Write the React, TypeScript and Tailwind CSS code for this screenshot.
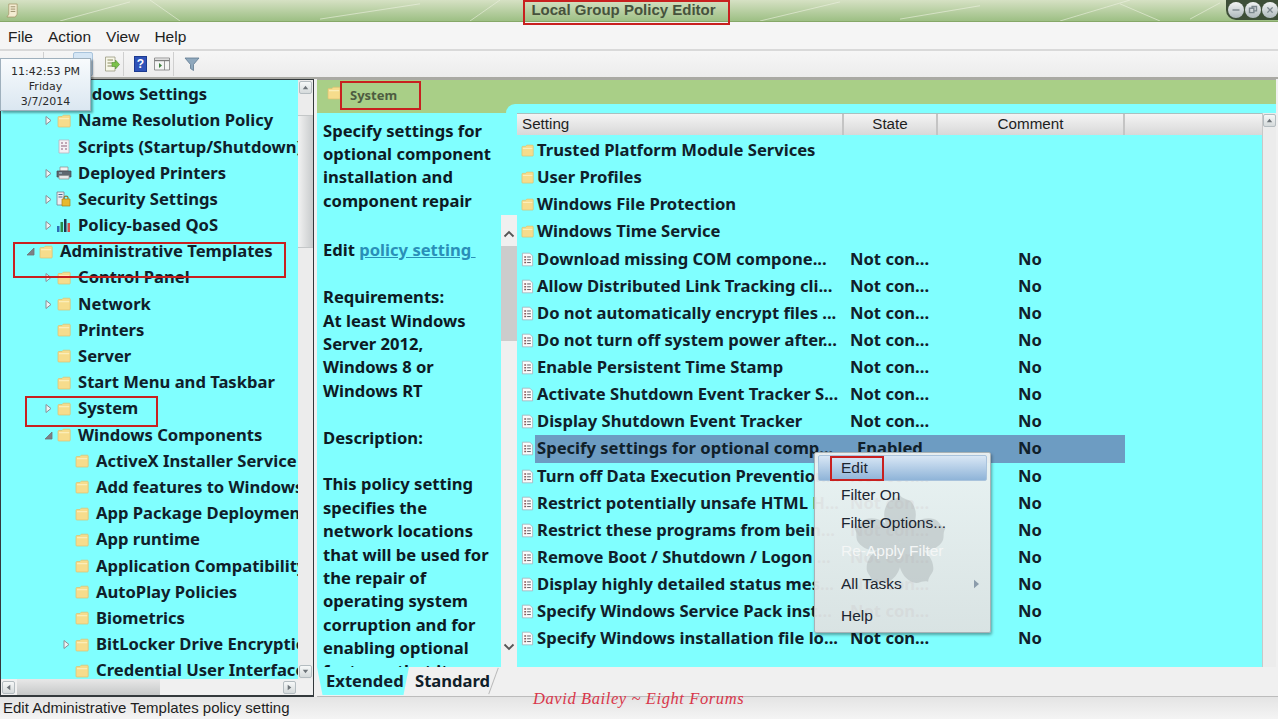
import type { ReactNode } from 'react';

type TreeIcon = 'folder' | 'script' | 'printer' | 'security' | 'chart';
type TreeRow = { label: string; depth: number; icon: TreeIcon; arrow?: 'closed' | 'open' };

const treeRows: TreeRow[] = [
  { label: 'Windows Settings', depth: 1, icon: 'folder', arrow: 'open' },
  { label: 'Name Resolution Policy', depth: 2, icon: 'folder', arrow: 'closed' },
  { label: 'Scripts (Startup/Shutdown)', depth: 2, icon: 'script' },
  { label: 'Deployed Printers', depth: 2, icon: 'printer', arrow: 'closed' },
  { label: 'Security Settings', depth: 2, icon: 'security', arrow: 'closed' },
  { label: 'Policy-based QoS', depth: 2, icon: 'chart', arrow: 'closed' },
  { label: 'Administrative Templates', depth: 1, icon: 'folder', arrow: 'open' },
  { label: 'Control Panel', depth: 2, icon: 'folder', arrow: 'closed' },
  { label: 'Network', depth: 2, icon: 'folder', arrow: 'closed' },
  { label: 'Printers', depth: 2, icon: 'folder' },
  { label: 'Server', depth: 2, icon: 'folder' },
  { label: 'Start Menu and Taskbar', depth: 2, icon: 'folder' },
  { label: 'System', depth: 2, icon: 'folder', arrow: 'closed' },
  { label: 'Windows Components', depth: 2, icon: 'folder', arrow: 'open' },
  { label: 'ActiveX Installer Service', depth: 3, icon: 'folder' },
  { label: 'Add features to Windows 8', depth: 3, icon: 'folder' },
  { label: 'App Package Deployment', depth: 3, icon: 'folder' },
  { label: 'App runtime', depth: 3, icon: 'folder' },
  { label: 'Application Compatibility', depth: 3, icon: 'folder' },
  { label: 'AutoPlay Policies', depth: 3, icon: 'folder' },
  { label: 'Biometrics', depth: 3, icon: 'folder' },
  { label: 'BitLocker Drive Encryption', depth: 3, icon: 'folder', arrow: 'closed' },
  { label: 'Credential User Interface', depth: 3, icon: 'folder' },
];

const folderRows = ['Trusted Platform Module Services', 'User Profiles', 'Windows File Protection', 'Windows Time Service'];

const policyRows = [
  { label: 'Download missing COM compone...', state: 'Not con...' },
  { label: 'Allow Distributed Link Tracking cli...', state: 'Not con...' },
  { label: 'Do not automatically encrypt files ...', state: 'Not con...' },
  { label: 'Do not turn off system power after...', state: 'Not con...' },
  { label: 'Enable Persistent Time Stamp', state: 'Not con...' },
  { label: 'Activate Shutdown Event Tracker S...', state: 'Not con...' },
  { label: 'Display Shutdown Event Tracker', state: 'Not con...' },
  { label: 'Specify settings for optional comp...', state: 'Enabled', selected: true },
  { label: 'Turn off Data Execution Prevention...', state: 'Not con...' },
  { label: 'Restrict potentially unsafe HTML H...', state: 'Not con...' },
  { label: 'Restrict these programs from bein...', state: 'Not con...' },
  { label: 'Remove Boot / Shutdown / Logon ...', state: 'Not con...' },
  { label: 'Display highly detailed status mes...', state: 'Not con...' },
  { label: 'Specify Windows Service Pack inst...', state: 'Not con...' },
  { label: 'Specify Windows installation file lo...', state: 'Not con...' },
];

const description = [
  'This policy setting',
  'specifies the',
  'network locations',
  'that will be used for',
  'the repair of',
  'operating system',
  'corruption and for',
  'enabling optional',
  'features that it',
];

function Folder({ className = 'w-[14px] h-[14px]' }: { className?: string }) {
  return (
    <svg viewBox="0 0 14 14" className={`shrink-0 ${className}`}>
      <path d="M1 3.5 C1 2.8 1.4 2.5 2 2.5 H5 L6.2 1.2 H12.4 C12.9 1.2 13.2 1.5 13.2 2 V12.2 C13.2 12.7 12.9 13 12.4 13 H1.8 C1.3 13 1 12.7 1 12.2 Z" fill="#f6dc8c" stroke="#dcc070" strokeWidth="0.7" />
      <path d="M2 4.2 H12.2 V5.2 H2 Z" fill="#fdf2c4" />
    </svg>
  );
}

function PolicyDoc() {
  return (
    <svg viewBox="0 0 14 15" className="w-[13px] h-[15px] shrink-0">
      <path d="M1.5 0.7 H9.5 L12.5 3.7 V14.3 H1.5 Z" fill="#fbfbfb" stroke="#a9a9b4" strokeWidth="0.8" />
      <path d="M3.5 4 H5.5 V5.6 H3.5 Z M3.5 7 H5.5 V8.6 H3.5 Z M3.5 10 H5.5 V11.6 H3.5 Z" fill="#8a5a5a" />
      <path d="M6.6 4.8 H10.6 M6.6 7.8 H10.6 M6.6 10.8 H10.6" stroke="#55555f" strokeWidth="1" />
    </svg>
  );
}

function TreeGlyph({ icon }: { icon: TreeIcon }) {
  if (icon === 'folder') return <Folder />;
  if (icon === 'script') {
    return (
      <svg viewBox="0 0 14 15" className="w-[14px] h-[15px] shrink-0">
        <path d="M2 1 H12 V14 H2 Z" fill="#f3f1f4" stroke="#b9b4c0" strokeWidth="0.8" />
        <path d="M4 4 H6 M8 4 H10 M4 7 H10 M4 10 H6 M8 10 H10" stroke="#8c5f78" strokeWidth="1.2" />
      </svg>
    );
  }
  if (icon === 'printer') {
    return (
      <svg viewBox="0 0 16 14" className="w-[16px] h-[14px] shrink-0">
        <path d="M4 1 H12 V5 H4 Z" fill="#f2f2f2" stroke="#8a8a8a" strokeWidth="0.7" />
        <path d="M1 5 H15 V11 H1 Z" fill="#5f6870" stroke="#3f454b" strokeWidth="0.7" />
        <path d="M3 9.5 H13 V13 H3 Z" fill="#e8e8e8" stroke="#8a8a8a" strokeWidth="0.7" />
        <path d="M3 7 H6" stroke="#b7d2e0" strokeWidth="1" />
      </svg>
    );
  }
  if (icon === 'security') {
    return (
      <svg viewBox="0 0 15 16" className="w-[15px] h-[16px] shrink-0">
        <path d="M1 1 H8 V14 H1 Z" fill="#ededf2" stroke="#7c7f8c" strokeWidth="0.8" />
        <path d="M2.5 3.5 H6.5 M2.5 6 H6.5" stroke="#4d6b8f" strokeWidth="1.2" />
        <path d="M8 8 V6.5 C8 4.6 12 4.6 12 6.5 V8" fill="none" stroke="#8d7330" strokeWidth="1.2" />
        <path d="M6 8 H14 V15 H6 Z" fill="#e7b92f" stroke="#a9811a" strokeWidth="0.7" />
      </svg>
    );
  }
  return (
    <svg viewBox="0 0 16 15" className="w-[16px] h-[15px] shrink-0">
      <path d="M1 8 H3.5 V14 H1 Z" fill="#2d6fb5" />
      <path d="M4.5 4 H7 V14 H4.5 Z" fill="#2a8c4a" />
      <path d="M8 1 H10.5 V14 H8 Z" fill="#20354f" />
      <path d="M11.5 5 H14 V14 H11.5 Z" fill="#d0504a" />
    </svg>
  );
}

function Arrow({ kind }: { kind?: 'closed' | 'open' }) {
  if (!kind) return <span className="w-[9px] shrink-0" />;
  return (
    <svg viewBox="0 0 9 11" className="w-[9px] h-[11px] shrink-0">
      {kind === 'closed' ? (
        <path d="M2 1.5 L7 5.5 L2 9.5 Z" fill="#eef3f3" stroke="#8a8f96" strokeWidth="1" />
      ) : (
        <path d="M1 9 L8 9 L8 2 Z" fill="#7d8085" stroke="#6f7277" strokeWidth="0.8" />
      )}
    </svg>
  );
}

function ScrollButton({ dir }: { dir: 'up' | 'down' | 'left' | 'right' }) {
  const paths = { up: 'M2 7 L5 3 L8 7 Z', down: 'M2 3 L5 7 L8 3 Z', left: 'M7 2 L3 5 L7 8 Z', right: 'M3 2 L7 5 L3 8 Z' };
  return (
    <span className="flex items-center justify-center w-[13px] h-[13px] shrink-0 rounded-[2px] border border-[#b4bcc0] bg-gradient-to-b from-[#f6f8f8] to-[#d5dadb]">
      <svg viewBox="0 0 10 10" className="w-[9px] h-[9px]">
        <path d={paths[dir]} fill="#6d7378" />
      </svg>
    </span>
  );
}

function Separator() {
  return <span className="w-px h-[24px] bg-[#cfcfcf] shrink-0" />;
}

function RedBox({ className }: { className: string }) {
  return <div className={`absolute border-2 border-[#c8201f] pointer-events-none ${className}`} />;
}

function Line({ children, className = '' }: { children: ReactNode; className?: string }) {
  return <div className={`h-[23.4px] leading-[23.4px] whitespace-nowrap ${className}`}>{children}</div>;
}

function Hibiscus() {
  return (
    <svg viewBox="0 0 100 100" className="absolute left-[33px] top-[38px] w-[104px] h-[104px] opacity-35">
      <g fill="#9aa2a4">
        {[0, 72, 144, 216, 288].map((deg) => (
          <path key={deg} transform={`rotate(${deg} 50 50)`} d="M50 50 C38 40 30 24 38 12 C41 7 46 9 50 4 C54 9 59 7 62 12 C70 24 62 40 50 50 Z" />
        ))}
      </g>
    </svg>
  );
}

function ContextMenu() {
  const item = 'h-[28px] flex items-center pl-[23px] pr-[7px] text-[15.5px] text-[#1c2530]';
  return (
    <div className="absolute left-[814px] top-[452px] w-[177px] h-[181px] rounded-[2px] border border-[#a8b2b6] bg-gradient-to-b from-[#eef2f2f2] to-[#dde2e2f4] shadow-[1px_2px_3px_rgba(0,0,0,0.35)] p-[2px_3px] font-['Liberation_Sans',sans-serif]">
      <Hibiscus />
      <div className="relative">
        <div className="h-[26px] flex items-center pl-[22px] text-[15.5px] text-[#1c2530] rounded-[2px] bg-gradient-to-b from-[#d9e7f5] to-[#8fb4d8] border border-[#a9c3dc]">Edit</div>
        <div className={item}>Filter On</div>
        <div className={item}>Filter Options...</div>
        <div className={`${item} text-[#f4f6f6]`}>Re-Apply Filter</div>
        <div className={`${item} mt-[5px] justify-between`}>
          <span>All Tasks</span>
          <svg viewBox="0 0 8 12" className="w-[7px] h-[10px]">
            <path d="M1 1 L7 6 L1 11 Z" fill="#8b9cab" />
          </svg>
        </div>
        <div className={`${item} mt-[4px]`}>Help</div>
      </div>
    </div>
  );
}

export default function App() {
  return (
    <div className="relative w-[1278px] h-[719px] overflow-hidden flex flex-col bg-[#f0f0f0] font-['Noto_Sans',sans-serif]">
      {/* Title bar */}
      <div className="relative h-[22px] shrink-0 flex items-center justify-center pr-[31px] bg-gradient-to-b from-[#d6e1c4] to-[#9dbf84] border-b border-[#86a868]">
        <svg viewBox="0 0 1278 22" className="absolute inset-0 w-full h-full" preserveAspectRatio="none">
          <path d="M60 22 L130 2 M180 22 L150 0 M320 20 L420 4 M470 22 L500 0 M760 22 L840 2 M900 20 L980 6 M1060 22 L1130 0 M1160 22 L1120 4 M1190 20 L1220 3" stroke="#eef2e2" strokeWidth="1" opacity="0.6" fill="none" />
        </svg>
        <svg viewBox="0 0 14 16" className="absolute left-[6px] top-[3px] w-[13px] h-[15px]">
          <path d="M3 1 H12 V12 L10 15 H1 L3 12 Z" fill="#f4ecd2" stroke="#a49668" strokeWidth="0.8" />
          <path d="M5 4 H10 M5 6.5 H10 M5 9 H10" stroke="#8b7f5a" strokeWidth="0.9" />
        </svg>
        <span className="relative text-[15px] font-bold text-[#46523c] font-['Liberation_Sans',sans-serif]">Local Group Policy Editor</span>
        <div className="absolute right-0 top-0 h-[20px] w-[52px] rounded-bl-[10px] bg-[#3e4f38] flex items-center justify-end gap-[1px]">
          {['M4 8 H12', 'M4 6 H9 V11 H4 Z M7 6 V4 H12 V9 H9', 'M5 5 L11 11 M11 5 L5 11'].map((d) => (
            <span key={d} className="w-[16px] h-[16px] rounded-full bg-gradient-to-b from-[#f2f4f4] to-[#aeb8bb] flex items-center justify-center">
              <svg viewBox="0 0 16 16" className="w-[14px] h-[14px]">
                <path d={d} fill="none" stroke="#7b878d" strokeWidth="1.6" />
              </svg>
            </span>
          ))}
        </div>
      </div>

      {/* Menu bar */}
      <div className="h-[29px] shrink-0 flex items-center gap-[15px] pl-[8px] pt-[2px] bg-[#f5f5f5] border-b-2 border-[#d9d9d9] text-[15.5px] text-[#1e1e1e] font-['Liberation_Sans',sans-serif]">
        <span>File</span>
        <span>Action</span>
        <span>View</span>
        <span>Help</span>
      </div>

      {/* Toolbar */}
      <div className="h-[28px] shrink-0 flex items-center pl-[43px] bg-gradient-to-b from-[#f6f6f6] to-[#ececec] border-b-2 border-[#a9a9a3]">
        <Separator />
        <span className="w-[29px] shrink-0" />
        <span className="w-[20px] h-[24px] shrink-0 rounded-[2px] border border-[#a9c4dc] bg-[#d5e6f5]" />
        <span className="w-[11px] shrink-0" />
        <svg viewBox="0 0 16 16" className="w-[16px] h-[16px] shrink-0">
          <path d="M1.5 1 H11 V15 H1.5 Z" fill="#f7f7e8" stroke="#9a9a82" strokeWidth="0.8" />
          <path d="M3.5 4 H9 M3.5 7 H8 M3.5 10 H8" stroke="#8a8a60" strokeWidth="1" />
          <path d="M8 6.5 H11.5 V4 L15.5 8.5 L11.5 13 V10.5 H8 Z" fill="#7cc24a" stroke="#4f8f2c" strokeWidth="0.6" />
        </svg>
        <span className="w-[3px] shrink-0" />
        <Separator />
        <span className="w-[10px] shrink-0" />
        <span className="w-[13px] h-[16px] shrink-0 bg-[#2f52b8] border border-[#1c3a90] flex items-center justify-center text-[12px] leading-none font-bold text-white font-['Liberation_Sans',sans-serif]">?</span>
        <svg viewBox="0 0 16 14" className="w-[16px] h-[14px] shrink-0 ml-[7px]">
          <path d="M0.5 1 H15.5 V13 H0.5 Z" fill="#f4f4f4" stroke="#7d7d7d" strokeWidth="0.8" />
          <path d="M0.5 3.5 H15.5" stroke="#7d7d7d" strokeWidth="1.4" />
          <path d="M10.5 3.5 V13" stroke="#7d7d7d" strokeWidth="0.8" />
          <path d="M5 6 L8 8.5 L5 11 Z" fill="#3f7f3f" />
        </svg>
        <span className="w-[3px] shrink-0" />
        <Separator />
        <svg viewBox="0 0 16 16" className="w-[16px] h-[16px] shrink-0 ml-[10px]">
          <path d="M1 2 H15 L9.5 8.5 V14.5 L6.5 12.5 V8.5 Z" fill="#8fa8bd" stroke="#5f7a90" strokeWidth="0.8" />
        </svg>
      </div>

      {/* Body */}
      <div className="flex-1 min-h-0 flex">
        {/* Tree pane */}
        <div className="w-[314px] shrink-0 flex flex-col border border-[#33393c] border-b-2 bg-[#efefef]">
          <div className="flex-1 min-h-0 flex">
            <div className="w-[297px] shrink-0 bg-[#80ffff] overflow-hidden pt-[1.5px]">
              {treeRows.map((row) => (
                <div
                  key={row.label}
                  className={`h-[26.2px] flex items-center whitespace-nowrap text-[16.6px] font-bold text-[#10202a] ${
                    row.depth === 1 ? 'pl-[25px]' : row.depth === 2 ? 'pl-[43px]' : 'pl-[61px]'
                  }`}
                >
                  <Arrow kind={row.arrow} />
                  <span className="w-[23px] shrink-0 flex justify-center ml-[-1px]">
                    <TreeGlyph icon={row.icon} />
                  </span>
                  <span className="ml-[3px]">{row.label}</span>
                </div>
              ))}
            </div>
            <div className="w-[15px] shrink-0 flex flex-col items-center py-[1px] bg-[#ececec]">
              <ScrollButton dir="up" />
              <div className="w-full h-[133px] mt-[21px] bg-gradient-to-r from-[#f2f2f2] to-[#c8cbcc] border-y border-[#c4c7c8]" />
              <div className="flex-1" />
              <ScrollButton dir="down" />
            </div>
          </div>
          <div className="h-[16px] shrink-0 flex items-center gap-[2px] px-[1px] bg-[#f0f0f0]">
            <ScrollButton dir="left" />
            <div className="w-[143px] h-full bg-gradient-to-b from-[#e8e8e8] to-[#c6c8c8]" />
            <div className="flex-1" />
            <ScrollButton dir="right" />
            <span className="w-[14px]" />
          </div>
        </div>

        {/* Right pane */}
        <div className="flex-1 min-w-0 ml-[3px] flex flex-col">
          <div className="flex-1 min-h-0 flex mr-[2px] bg-[#a9cf87] border-t-2 border-[#a9a9a3] -mt-px">
            {/* Heading and extended description */}
            <div className="w-[184px] shrink-0 flex flex-col">
              <div className="h-[33px] shrink-0 flex items-center pl-[10px] gap-[9px]">
                <Folder className="w-[14px] h-[14px] mt-[-8px]" />
                <span className="text-[13px] font-bold text-[#4d5c40] mt-[-1px]">System</span>
              </div>
              <div className="flex-1 min-h-0 overflow-hidden bg-[#80ffff] pl-[6px] pt-[5.5px] text-[16.6px] font-bold text-[#0d1a24]">
                <Line>Specify settings for</Line>
                <Line>optional component</Line>
                <Line>installation and</Line>
                <Line>component repair</Line>
                <Line> </Line>
                <Line className="mt-[3px]">
                  Edit <span className="whitespace-pre text-[#2a8fb8] underline">policy setting </span>
                </Line>
                <Line> </Line>
                <Line>Requirements:</Line>
                <Line>At least Windows</Line>
                <Line>Server 2012,</Line>
                <Line>Windows 8 or</Line>
                <Line>Windows RT</Line>
                <Line> </Line>
                <Line>Description:</Line>
                <Line> </Line>
                {description.map((text) => (
                  <Line key={text}>{text}</Line>
                ))}
              </div>
            </div>

            <div className="flex-1 min-w-0 flex flex-col">
              <div className="h-[24px] shrink-0" />
              <div className="h-[9px] shrink-0 bg-[#a9cf87]">
                <div className="h-full ml-[5px] rounded-tl-[10px] bg-[#80ffff]" />
              </div>
              <div className="flex-1 min-h-0 flex bg-[#80ffff]">
                {/* Description scrollbar */}
                <div className="w-[16px] shrink-0 flex flex-col pt-[102px]">
                  <div className="flex-1 flex flex-col items-center bg-[#f0f0f0]">
                    <svg viewBox="0 0 12 8" className="w-[12px] h-[8px] mt-[15px] mb-[8px]">
                      <path d="M1.5 6.5 L6 2 L10.5 6.5" fill="none" stroke="#555" strokeWidth="1.8" />
                    </svg>
                    <div className="w-full h-[95px] bg-[#cccccc]" />
                    <div className="flex-1" />
                    <svg viewBox="0 0 12 8" className="w-[12px] h-[8px] mb-[16px]">
                      <path d="M1.5 1.5 L6 6 L10.5 1.5" fill="none" stroke="#555" strokeWidth="1.8" />
                    </svg>
                  </div>
                </div>

                {/* List */}
                <div className="flex-1 min-w-0 flex flex-col overflow-hidden">
                  <div className="h-[22px] shrink-0 flex items-stretch bg-gradient-to-b from-[#f4f4f4] to-[#d8d8d8] border-t border-[#a9c0c0] text-[15.2px] text-[#1e1e1e] font-['Liberation_Sans',sans-serif]">
                    <div className="w-[327px] pl-[5px] flex items-center border-r-2 border-[#c4c4c4]">Setting</div>
                    <div className="w-[94px] flex items-center justify-center border-r-2 border-[#c4c4c4]">State</div>
                    <div className="w-[187px] flex items-center justify-center border-r-2 border-[#c4c4c4]">Comment</div>
                  </div>
                  <div className="pt-[2px] text-[16.6px] font-bold text-[#10202a]">
                    {folderRows.map((label) => (
                      <div key={label} className="h-[27.13px] flex items-center pl-[4px] whitespace-nowrap">
                        <Folder className="w-[13px] h-[13px]" />
                        <span className="ml-[3px]">{label}</span>
                      </div>
                    ))}
                    {policyRows.map((row) => (
                      <div key={row.label} className="h-[27.13px] flex items-center pl-[4px] whitespace-nowrap">
                        <PolicyDoc />
                        <div className={`w-[590px] h-full ml-[1px] flex items-center ${row.selected ? 'bg-[#6d9cc2]' : ''}`}>
                          <span className="w-[315px] shrink-0 pl-[2px] overflow-hidden">{row.label}</span>
                          <span className={`w-[168px] shrink-0 ${row.selected ? 'pl-[7px]' : ''}`}>{row.state}</span>
                          <span>No</span>
                        </div>
                      </div>
                    ))}
                  </div>
                </div>

                {/* List scrollbar */}
                <div className="w-[14px] shrink-0 flex flex-col items-center pt-[1px] bg-[#ececec] border-l border-[#c8c8c8]">
                  <ScrollButton dir="up" />
                </div>
              </div>
            </div>
          </div>

          {/* Tabs */}
          <div className="h-[30px] shrink-0 flex items-start border-b border-[#bcbcbc] bg-[#f0f0f0] text-[16.6px] font-bold text-[#10202a]">
            <div className="w-[92px] h-[28px] pl-[9px] leading-[28px] bg-[#80ffff] [clip-path:polygon(0_0,100%_0,94%_100%,6%_100%)]">Extended</div>
            <div className="w-[88px] h-[28px] pl-[6px] leading-[28px]">Standard</div>
            <span className="w-px h-[28px] bg-[#b9b9b9] rotate-[20deg] -ml-[4px]" />
          </div>
        </div>
      </div>

      {/* Status bar */}
      <div className="h-[22px] shrink-0 flex items-center pl-[3px] bg-gradient-to-b from-[#e4e4e4] to-[#f4f4f4] text-[15px] text-[#1e1e1e] font-['Liberation_Sans',sans-serif]">
        Edit Administrative Templates policy setting
      </div>

      {/* Overlays */}
      <div className="absolute left-0 top-[58px] w-[91px] h-[53px] pt-[3px] flex flex-col items-center justify-center bg-gradient-to-b from-[#f8fbfd] to-[#dbe7f1] border border-[#9fb0bd] shadow-[2px_2px_2px_rgba(0,0,0,0.35)] text-[11px] leading-[15px] text-[#2a2a2a] font-['DejaVu_Sans',sans-serif]">
        <span>11:42:53 PM</span>
        <span>Friday</span>
        <span>3/7/2014</span>
      </div>

      <ContextMenu />

      <RedBox className="left-[523px] top-0 w-[207px] h-[25px]" />
      <RedBox className="left-[340px] top-[81px] w-[81px] h-[29px]" />
      <RedBox className="left-[13px] top-[242px] w-[273px] h-[36px]" />
      <RedBox className="left-[25px] top-[396px] w-[133px] h-[31px]" />
      <RedBox className="left-[830px] top-[456px] w-[54px] h-[25px]" />

      <span className="absolute left-[533px] top-[687px] text-[16.5px] italic tracking-[0.6px] text-[#d9364a] whitespace-nowrap font-['Liberation_Serif',serif]">
        David Bailey ~ Eight Forums
      </span>
    </div>
  );
}
